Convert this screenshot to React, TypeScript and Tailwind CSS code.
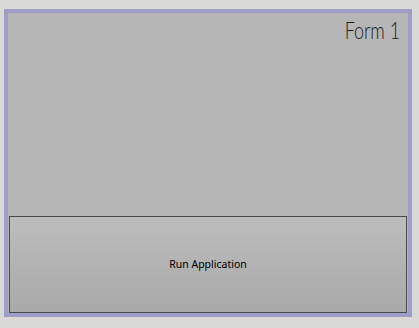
import React from 'react'

const App: React.FC = () => {
 return (
  <div className="w-[419px] h-[328px] bg-[#d9dad6] pl-[4px] pt-[9px]">
   <div className="w-[408px] h-[308px] border-4 border-[#9d9dca] bg-[#b6b6b6] flex flex-col">
    <div className="flex justify-end pr-[8px] pt-[3px]">
     <span
      className="inline-block origin-right scale-x-[0.78] text-[23px] leading-[28px] text-[#1a1a1a] font-light"
      style={{ fontFamily: '"Lato", sans-serif' }}>
      Form 1
     </span>
    </div>
    <div className="flex-1" />
    <button
     type="button"
     className="mx-[1px] h-[97px] border border-[#4a4a4a] bg-gradient-to-b from-[#bdbdbd] to-[#a9a9a9] flex items-center justify-center text-[10.5px] text-black"
     style={{ fontFamily: '"Noto Sans", sans-serif' }}>
     Run Application
    </button>
   </div>
  </div>
 )
}

export default App
